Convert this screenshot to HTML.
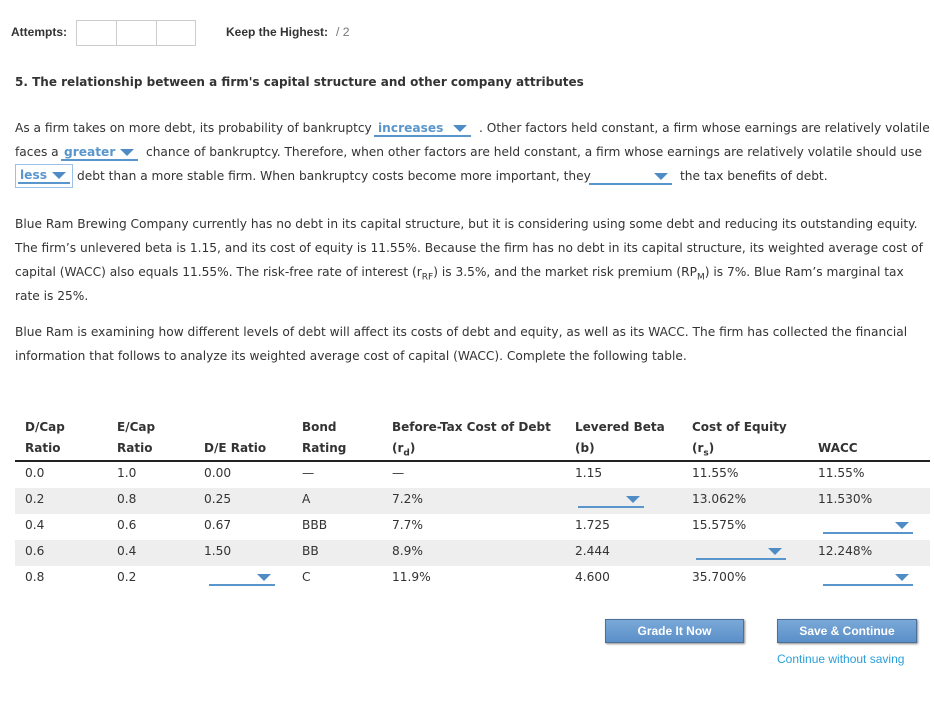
<!DOCTYPE html>
<html><head><style>
body{margin:0;width:934px;height:706px;background:#fff;position:relative;font-family:"DejaVu Sans","Liberation Sans",sans-serif;font-size:12.2px;color:#333;overflow:hidden}
.a{position:absolute;white-space:nowrap}
.l{font-family:"Liberation Sans",sans-serif;font-weight:bold;font-size:12px;color:#333}
.dd{position:absolute;border-bottom:2px solid #5a96cc;height:14px}
.tri{position:absolute;right:4px;top:4px;width:0;height:0;border-left:7px solid transparent;border-right:7px solid transparent;border-top:7px solid #4f8cc6}
.sel{color:#5a96cc;font-weight:bold}
.b{font-weight:bold;font-size:12px}
.row{position:absolute;left:15px;width:915px;height:26px;background:#eee}
.btn{position:absolute;height:22px;background:linear-gradient(#7aa9d8,#5b8fc8);border:1px solid #4a6f99;box-shadow:1px 1px 2px #888;color:#fff;font-family:"Liberation Sans",sans-serif;font-weight:bold;font-size:12px;text-align:center;line-height:22px}
</style></head><body>
<div class="a l" style="left:11px;top:25px">Attempts:</div>
<div class="a" style="left:76px;top:20px;width:118px;height:24px;border:1px solid #ccc"></div>
<div class="a" style="left:116px;top:20px;width:1px;height:26px;background:#ccc"></div>
<div class="a" style="left:156px;top:20px;width:1px;height:26px;background:#ccc"></div>
<div class="a l" style="left:226px;top:25px">Keep the Highest:</div>
<div class="a" style="left:336px;top:25px;font-family:'Liberation Sans',sans-serif;color:#777">/ 2</div>
<div class="a b" style="left:15px;top:75px">5. The relationship between a firm's capital structure and other company attributes</div>

<div class="a" style="left:15px;top:121px">As a firm takes on more debt, its probability of bankruptcy</div>
<div class="dd" style="left:374px;top:121px;width:97px"><span class="sel" style="margin-left:4px">increases</span><div class="tri"></div></div>
<div class="a" style="left:479px;top:121px">. Other factors held constant, a firm whose earnings are relatively volatile</div>
<div class="a" style="left:15px;top:145px">faces a</div>
<div class="dd" style="left:61px;top:145px;width:77px"><span class="sel" style="margin-left:3px">greater</span><div class="tri"></div></div>
<div class="a" style="left:146px;top:145px">chance of bankruptcy. Therefore, when other factors are held constant, a firm whose earnings are relatively volatile should use</div>
<div class="a" style="left:15px;top:164px;width:56px;height:22px;border:1px solid #9cc0ec"></div>
<div class="dd" style="left:18px;top:168px;width:52px"><span class="sel" style="margin-left:2px">less</span><div class="tri"></div></div>
<div class="a" style="left:77px;top:169px">debt than a more stable firm. When bankruptcy costs become more important, they</div>
<div class="dd" style="left:589px;top:169px;width:83px"><div class="tri"></div></div>
<div class="a" style="left:680px;top:169px">the tax benefits of debt.</div>

<div class="a" style="left:15px;top:217px">Blue Ram Brewing Company currently has no debt in its capital structure, but it is considering using some debt and reducing its outstanding equity.</div>
<div class="a" style="left:15px;top:241px">The firm’s unlevered beta is 1.15, and its cost of equity is 11.55%. Because the firm has no debt in its capital structure, its weighted average cost of</div>
<div class="a" style="left:15px;top:265px">capital (WACC) also equals 11.55%. The risk-free rate of interest (r<sub style="font-size:9px">RF</sub>) is 3.5%, and the market risk premium (RP<sub style="font-size:9px">M</sub>) is 7%. Blue Ram’s marginal tax</div>
<div class="a" style="left:15px;top:289px">rate is 25%.</div>

<div class="a" style="left:15px;top:325px">Blue Ram is examining how different levels of debt will affect its costs of debt and equity, as well as its WACC. The firm has collected the financial</div>
<div class="a" style="left:15px;top:349px">information that follows to analyze its weighted average cost of capital (WACC). Complete the following table.</div>

<div class="a b" style="left:25px;top:420px">D/Cap</div><div class="a b" style="left:25px;top:441px">Ratio</div>
<div class="a b" style="left:117px;top:420px">E/Cap</div><div class="a b" style="left:117px;top:441px">Ratio</div>
<div class="a b" style="left:204px;top:441px">D/E Ratio</div>
<div class="a b" style="left:302px;top:420px">Bond</div><div class="a b" style="left:302px;top:441px">Rating</div>
<div class="a b" style="left:392px;top:420px">Before-Tax Cost of Debt</div><div class="a b" style="left:392px;top:441px">(r<sub style="font-size:9px">d</sub>)</div>
<div class="a b" style="left:575px;top:420px">Levered Beta</div><div class="a b" style="left:575px;top:441px">(b)</div>
<div class="a b" style="left:692px;top:420px">Cost of Equity</div><div class="a b" style="left:692px;top:441px">(r<sub style="font-size:9px">s</sub>)</div>
<div class="a b" style="left:818px;top:441px">WACC</div>
<div class="a" style="left:15px;top:460px;width:915px;height:2px;background:#222"></div>

<div class="row" style="top:488px"></div>
<div class="row" style="top:540px"></div>

<div class="a" style="left:25px;top:466px">0.0</div><div class="a" style="left:117px;top:466px">1.0</div><div class="a" style="left:204px;top:466px">0.00</div><div class="a" style="left:302px;top:466px">—</div><div class="a" style="left:392px;top:466px">—</div><div class="a" style="left:575px;top:466px">1.15</div><div class="a" style="left:692px;top:466px">11.55%</div><div class="a" style="left:818px;top:466px">11.55%</div>

<div class="a" style="left:25px;top:492px">0.2</div><div class="a" style="left:117px;top:492px">0.8</div><div class="a" style="left:204px;top:492px">0.25</div><div class="a" style="left:302px;top:492px">A</div><div class="a" style="left:392px;top:492px">7.2%</div>
<div class="dd" style="left:578px;top:492px;width:66px"><div class="tri"></div></div>
<div class="a" style="left:692px;top:492px">13.062%</div><div class="a" style="left:818px;top:492px">11.530%</div>

<div class="a" style="left:25px;top:518px">0.4</div><div class="a" style="left:117px;top:518px">0.6</div><div class="a" style="left:204px;top:518px">0.67</div><div class="a" style="left:302px;top:518px">BBB</div><div class="a" style="left:392px;top:518px">7.7%</div><div class="a" style="left:575px;top:518px">1.725</div><div class="a" style="left:692px;top:518px">15.575%</div>
<div class="dd" style="left:823px;top:518px;width:90px"><div class="tri"></div></div>

<div class="a" style="left:25px;top:544px">0.6</div><div class="a" style="left:117px;top:544px">0.4</div><div class="a" style="left:204px;top:544px">1.50</div><div class="a" style="left:302px;top:544px">BB</div><div class="a" style="left:392px;top:544px">8.9%</div><div class="a" style="left:575px;top:544px">2.444</div>
<div class="dd" style="left:696px;top:544px;width:90px"><div class="tri"></div></div>
<div class="a" style="left:818px;top:544px">12.248%</div>

<div class="a" style="left:25px;top:570px">0.8</div><div class="a" style="left:117px;top:570px">0.2</div>
<div class="dd" style="left:209px;top:570px;width:66px"><div class="tri"></div></div>
<div class="a" style="left:302px;top:570px">C</div><div class="a" style="left:392px;top:570px">11.9%</div><div class="a" style="left:575px;top:570px">4.600</div><div class="a" style="left:692px;top:570px">35.700%</div>
<div class="dd" style="left:823px;top:570px;width:90px"><div class="tri"></div></div>

<div class="btn" style="left:605px;top:619px;width:137px">Grade It Now</div>
<div class="btn" style="left:777px;top:619px;width:138px">Save &amp; Continue</div>
<div class="a" style="left:777px;top:652px;font-family:'Liberation Sans',sans-serif;color:#2a9fd8;font-size:12px">Continue without saving</div>
</body></html>
